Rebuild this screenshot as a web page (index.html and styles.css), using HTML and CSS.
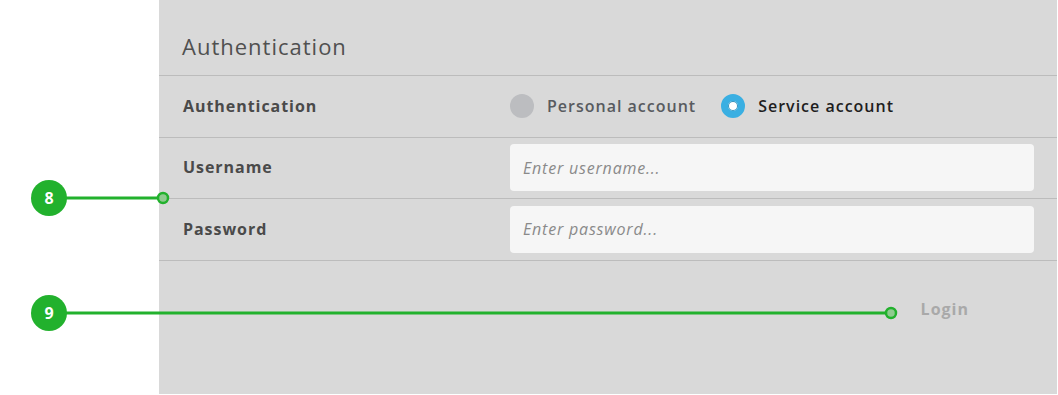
FILE: index.html
```html
<!DOCTYPE html>
<html>
<head>
<meta charset="utf-8">
<link rel="stylesheet" href="styles.css">
</head>
<body>
<div class="panel">
  <div class="header">Authentication</div>
  <div class="row">
    <div class="label">Authentication</div>
    <div class="radios">
      <div class="radio"><span class="dot"></span><span class="rtext">Personal account</span></div>
      <div class="radio active"><span class="dot"></span><span class="rtext">Service account</span></div>
    </div>
  </div>
  <div class="row tight">
    <div class="label">Username</div>
    <div class="input italic">Enter username...</div>
  </div>
  <div class="row">
    <div class="label">Password</div>
    <div class="input italic">Enter password...</div>
  </div>
  <div class="footer">
    <div class="login">Login</div>
  </div>
</div>
<svg class="annot" width="1058" height="395" viewBox="0 0 1058 395">
  <line x1="60" y1="198" x2="159" y2="198" class="aline"/>
  <circle cx="163" cy="198" r="5" class="adot"/>
  <circle cx="49" cy="198" r="18" class="abadge"/>
  <text x="49" y="204" class="anum">8</text>
  <line x1="60" y1="313" x2="887" y2="313" class="aline"/>
  <circle cx="891" cy="313" r="5" class="adot"/>
  <circle cx="49" cy="313" r="18" class="abadge"/>
  <text x="49" y="319" class="anum">9</text>
</svg>
</body>
</html>
```
FILE: styles.css
```css
html, body {
  margin: 0;
  padding: 0;
  background: #ffffff;
}
body {
  font-family: "Open Sans", "Noto Sans", sans-serif;
  position: relative;
  width: 1058px;
  height: 395px;
  overflow: hidden;
}
.panel {
  margin-left: 159px;
  width: 898px;
  height: 394px;
  background: #d9d9d9;
}
.header {
  height: 76px;
  box-sizing: border-box;
  border-bottom: 1px solid #bcbcbc;
  padding: 31px 0 0 23px;
  font-size: 22px;
  letter-spacing: 1px;
  color: #505050;
  line-height: 30px;
}
.row {
  height: 62px;
  box-sizing: border-box;
  border-bottom: 1px solid #bcbcbc;
  display: grid;
  grid-template-columns: 327px 1fr;
  align-items: center;
  padding: 0 23px 0 24px;
}
.row.tight {
  height: 61px;
}
.label {
  font-size: 16px;
  font-weight: 700;
  letter-spacing: 0.95px;
  color: #4a4a4a;
  margin-top: -2px;
}
.radios {
  display: flex;
  align-items: center;
  gap: 25px;
  margin-top: -2px;
}
.radio {
  display: flex;
  align-items: center;
  gap: 13px;
  font-size: 16px;
  font-weight: 600;
  letter-spacing: 1px;
  color: #585b60;
}
.dot {
  width: 24px;
  height: 24px;
  border-radius: 50%;
  background: #bcbdc0;
  box-sizing: border-box;
}
.radio.active {
  color: #1e1e1e;
}
.radio.active .dot {
  background: #ffffff;
  border: 7px solid #3aafe2;
  box-shadow: 0 0 0 1px #2e8fba inset;
}
.input {
  height: 47px;
  margin-top: -1px;
  background: #f6f6f6;
  border-radius: 4px;
  display: flex;
  align-items: center;
  padding-left: 13px;
  font-size: 16px;
  letter-spacing: 0.8px;
  color: #8a8a8a;
}
.italic {
  font-style: italic;
}
.footer {
  display: flex;
  justify-content: flex-end;
  padding: 36px 88px 0 0;
}
.login {
  font-size: 16px;
  font-weight: 700;
  letter-spacing: 1px;
  color: #a9a9a9;
  line-height: 24px;
}
.annot {
  position: absolute;
  left: 0;
  top: 0;
  pointer-events: none;
}
.aline {
  stroke: #22b12d;
  stroke-width: 3;
}
.adot {
  fill: #8fcb8f;
  stroke: #22b12d;
  stroke-width: 2.5;
}
.abadge {
  fill: #22b12d;
}
.anum {
  fill: #ffffff;
  font-family: "Open Sans", sans-serif;
  font-weight: 700;
  font-size: 16px;
  text-anchor: middle;
}
```
